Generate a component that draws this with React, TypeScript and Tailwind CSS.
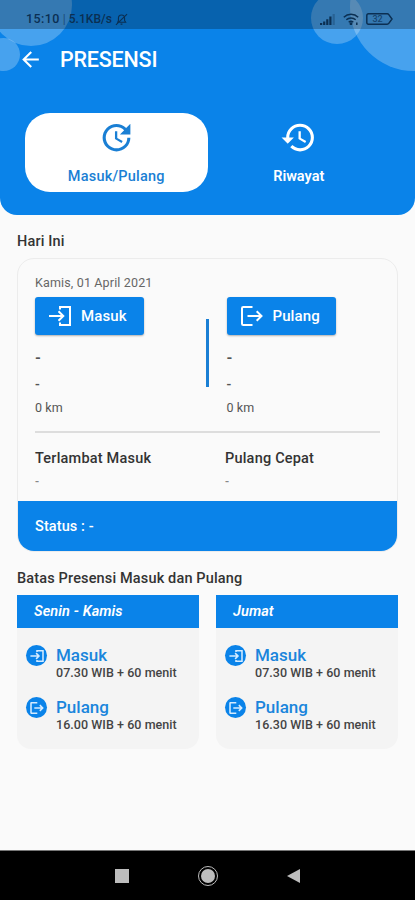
import React from 'react';
import { MdArrowBack, MdHistory, MdUpdate } from 'react-icons/md';
import { cx } from 'class-variance-authority';

interface IconProps {
    className?: string;
}

const EnterIcon: React.FC<IconProps> = ({ className }) => (
    <svg viewBox="0 0 22 20" fill="none" stroke="currentColor" className={className}>
        <path d="M11 3.5V1h10v18H11v-2.500" />
        <path d="M0 10h14M9.500 5.200L14.300 10l-4.800 4.800" />
    </svg>
);

const ExitIcon: React.FC<IconProps> = ({ className }) => (
    <svg viewBox="0 0 22 20" fill="none" stroke="currentColor" className={className}>
        <path d="M11.500 1H2.300Q1 1 1 2.300v15.400Q1 19 2.300 19h9.200" />
        <path d="M6.500 10h14M15.700 5.200l4.800 4.800-4.800 4.800" />
    </svg>
);

const StatusBar = () => (
    <div className="relative flex h-[29px] items-center justify-between bg-black/25 pl-[26px] pr-[22px] pt-[9px] text-[#0b2f52]">
        <div className="flex items-center">
            <span className="text-[12.5px] font-medium leading-4 tracking-[0.4px]">15:10</span>
            <span className="ml-[3px] text-[12px] leading-4 opacity-60">|</span>
            <span className="ml-[3px] text-[12px] font-medium leading-4 tracking-[0.05px]">5.1KB/s</span>
            <svg viewBox="0 0 14 14" fill="none" stroke="currentColor" strokeWidth="1.2" className="ml-[3px] h-[13px] w-[13px]">
                <path d="M3 10h8.5L10.3 8V5.5a3.3 3.3 0 0 0-6.6 0V8zM1 12.8L13 1.2M6 12h2" />
            </svg>
        </div>
        <div className="flex items-center">
            <svg viewBox="0 0 15 11" className="h-[11px] w-[15px]">
                <path d="M0 11v-2h2.2v2zM3.1 11V7.5h2.2V11zM6.2 11V5.2h2.2V11zM9.300 11V2.600h2.200V11z" fill="currentColor" />
                <path d="M12.6 11V0h2.200v11z" fill="currentColor" opacity=".3" />
            </svg>
            <svg viewBox="0 0 16 12" fill="none" stroke="currentColor" strokeWidth="1.5" className="ml-2 h-3 w-4">
                <path d="M.8 4.200a10.500 10.500 0 0 1 14.400 0M3.300 6.800a7 7 0 0 1 9.400 0M5.700 9.200a3.500 3.500 0 0 1 4.600 0" />
                <circle cx="8" cy="10.700" r=".7" fill="currentColor" />
                <path d="M13.800 9.500v2.500" />
            </svg>
            <div className="relative ml-[7px] h-3 w-[27px]">
                <svg viewBox="0 0 27 12" fill="none" stroke="currentColor" strokeWidth="1.5" className="h-3 w-[27px]">
                    <path d="M2.500.8h18.700q1 0 1.600.8L26 6l-3.200 4.400q-.6.8-1.600.8H2.500Q.8 11.200.8 9.500v-7Q.8.8 2.500.8z" />
                </svg>
                <span className="absolute inset-0 pr-1 text-center text-[9px] font-medium leading-3 opacity-70">32</span>
            </div>
        </div>
    </div>
);

interface TabProps {
    icon: React.ReactNode;
    label: string;
    active?: boolean;
}

const Tab: React.FC<TabProps> = ({ icon, label, active }) => (
    <button
        className={cx(
            'flex h-[79px] flex-1 flex-col items-center rounded-[25px] pt-[6px] text-[14.5px] leading-5',
            active ? 'bg-white font-medium tracking-[0.2px] text-[#1a7fd4]' : 'font-semibold text-white'
        )}
    >
        {icon}
        <span className="mt-[11px]">{label}</span>
    </button>
);

interface CheckColumnProps {
    button: string;
    icon: React.ReactNode;
}

const CheckColumn: React.FC<CheckColumnProps> = ({ button, icon }) => (
    <div className="flex flex-col items-start text-[#555]">
        <button className="flex h-[38px] w-[109px] items-center gap-[10px] rounded-[3px] bg-[#0a83e9] pl-[14px] text-[15px] font-medium tracking-[0.1px] text-white shadow-[0_1px_2px_rgba(0,0,0,0.3)]">
            {icon}
            {button}
        </button>
        <span className="mt-[13px] text-[15px] font-bold leading-5">-</span>
        <span className="mt-[6px] text-[14px] font-medium leading-5">-</span>
        <span className="mt-[6px] text-[12.5px] leading-4 tracking-[0.1px]">0 km</span>
    </div>
);

interface LimitRowProps {
    icon: React.ReactNode;
    title: string;
    time: string;
}

const LimitRow: React.FC<LimitRowProps> = ({ icon, title, time }) => (
    <div className="flex h-[52px] gap-[9px]">
        <div className="flex h-[21px] w-[21px] items-center justify-center rounded-full bg-[#0a83e9] text-[#d4ebff]">
            {icon}
        </div>
        <div>
            <div className="text-[17px] font-medium leading-5 text-[#1a85dc]">{title}</div>
            <div className="pt-px text-[12.5px] font-medium leading-[14px] tracking-[0.05px] text-[#444]">{time}</div>
        </div>
    </div>
);

const schedules = [
    { day: 'Senin - Kamis', masuk: '07.30 WIB + 60 menit', pulang: '16.00 WIB + 60 menit' },
    { day: 'Jumat', masuk: '07.30 WIB + 60 menit', pulang: '16.30 WIB + 60 menit' },
];

export default function App() {
    return (
        <div className="flex h-[900px] w-[415px] flex-col overflow-hidden bg-[#fafafa] font-['Roboto',sans-serif]">
            <header className="relative h-[215px] shrink-0 overflow-hidden rounded-b-[17px] bg-[#0a83e9]">
                <div className="absolute -left-[10px] -top-[36px] h-[82px] w-[82px] rounded-full bg-white/25" />
                <div className="absolute -left-[13px] top-[38px] h-[33px] w-[33px] rounded-full bg-white/25" />
                <div className="absolute left-[311px] -top-[8px] h-[52px] w-[52px] rounded-full bg-white/25" />
                <div className="absolute left-[350px] -top-[57px] h-[128px] w-[128px] rounded-full bg-white/25" />
                <StatusBar />
                <div className="relative flex h-[60px] items-center pl-[18px] pt-px text-white">
                    <MdArrowBack size={25} />
                    <h1 className="ml-[17px] pt-px text-[21.5px] font-medium leading-7 tracking-[-0.2px]">PRESENSI</h1>
                </div>
                <div className="mt-6 flex px-[25px]">
                    <Tab active icon={<MdUpdate size={37} />} label="Masuk/Pulang" />
                    <Tab icon={<MdHistory size={37} />} label="Riwayat" />
                </div>
            </header>

            <main className="flex flex-1 flex-col px-[17px] pt-[17px] text-[#333]">
                <h2 className="text-[14.5px] font-medium leading-5 tracking-[0.15px]">Hari Ini</h2>
                <section className="mt-[6px] flex h-[294px] w-[381px] flex-col overflow-hidden rounded-[17px] border border-[#ececec]">
                    <div className="flex-1 px-[17px] pt-4">
                        <div className="text-[12.5px] leading-4 tracking-[0.15px] text-[#666]">Kamis, 01 April 2021</div>
                        <div className="mt-[6px] flex">
                            <div className="w-[171px]">
                                <CheckColumn button="Masuk" icon={<EnterIcon className="h-5 w-[22px] stroke-2" />} />
                            </div>
                            <div className="mt-[22px] h-[68px] w-[3px] bg-[#1a7fd4]" />
                            <div className="ml-[17.5px]">
                                <CheckColumn button="Pulang" icon={<ExitIcon className="h-5 w-[22px] stroke-2" />} />
                            </div>
                        </div>
                        <div className="mt-[15px] h-[2px] bg-[#ddd]" />
                        <div className="mt-[16px] flex text-[14.5px] font-medium leading-5 tracking-[0.2px]">
                            <div className="w-[190px]">
                                <div>Terlambat Masuk</div>
                                <div className="mt-[3px] text-[12px] text-[#888]">-</div>
                            </div>
                            <div>
                                <div>Pulang Cepat</div>
                                <div className="mt-[3px] text-[12px] text-[#888]">-</div>
                            </div>
                        </div>
                    </div>
                    <div className="-mx-px -mb-px flex h-[51px] shrink-0 items-center bg-[#0a83e9] pl-[18px] pt-px text-[14.5px] font-medium tracking-[0.1px] text-white">
                        Status : -
                    </div>
                </section>

                <h2 className="mt-[17px] text-[14.5px] font-medium leading-5 tracking-[0.15px]">Batas Presensi Masuk dan Pulang</h2>
                <div className="mt-[6px] flex gap-[17px]">
                    {schedules.map((item) => (
                        <section key={item.day} className="h-[154px] w-[182px] overflow-hidden rounded-b-[14px] bg-[#f4f4f4]">
                            <div className="flex h-[33px] items-center bg-[#0a83e9] pl-[17px] pt-px text-[14.5px] font-semibold italic tracking-[0.1px] text-white">
                                {item.day}
                            </div>
                            <div className="pl-[9px] pt-[17px]">
                                <LimitRow icon={<EnterIcon className="h-3 w-[14px] stroke-[2.6]" />} title="Masuk" time={item.masuk} />
                                <LimitRow icon={<ExitIcon className="h-3 w-[14px] stroke-[2.6]" />} title="Pulang" time={item.pulang} />
                            </div>
                        </section>
                    ))}
                </div>
            </main>

            <nav className="flex h-[50px] shrink-0 items-center justify-center gap-[69px] border-t border-[#777] bg-black text-[#bdbdbd]">
                <div className="h-[14px] w-[14px] bg-current" />
                <div className="flex h-5 w-5 items-center justify-center rounded-full border border-current">
                    <div className="h-[14px] w-[14px] rounded-full bg-current" />
                </div>
                <svg viewBox="0 0 13 14" className="h-[14px] w-[13px]">
                    <path d="M13 0v14L0 7z" fill="currentColor" />
                </svg>
            </nav>
        </div>
    );
}
